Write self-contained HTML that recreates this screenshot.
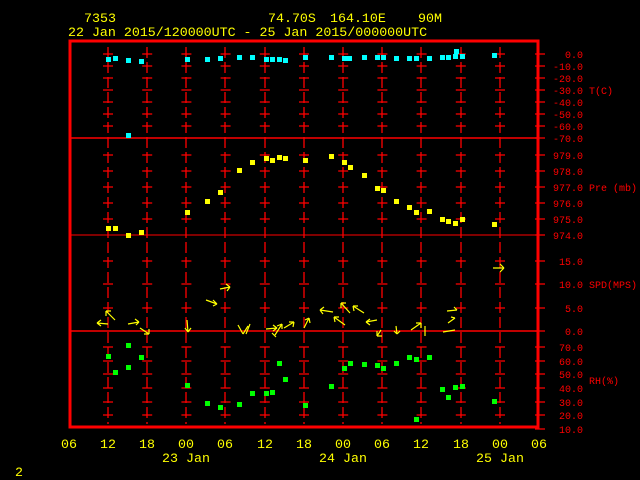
<!DOCTYPE html>
<html><head><meta charset="utf-8"><style>
html,body{margin:0;padding:0;background:#000;width:640px;height:480px;overflow:hidden}
svg{display:block}
text{font-family:"Liberation Mono","DejaVu Sans Mono",monospace}
.y{fill:#ff0}
.r{fill:#f00}
</style></head><body>
<svg width="640" height="480" viewBox="0 0 640 480" xmlns="http://www.w3.org/2000/svg">
<!-- header -->
<g class="y" font-size="13.3">
<text x="84" y="22">7353</text>
<text x="268" y="22">74.70S</text>
<text x="330" y="22">164.10E</text>
<text x="418" y="22">90M</text>
<text x="68" y="36">22 Jan 2015/120000UTC - 25 Jan 2015/000000UTC</text>
</g>
<!-- vertical grid -->
<g stroke="#f00" stroke-width="1.3" stroke-dasharray="11 4">
<line x1="108" y1="47" x2="108" y2="424"/>
<line x1="147" y1="47" x2="147" y2="424"/>
<line x1="186" y1="47" x2="186" y2="424"/>
<line x1="225" y1="47" x2="225" y2="424"/>
<line x1="265" y1="47" x2="265" y2="424"/>
<line x1="304" y1="47" x2="304" y2="424"/>
<line x1="343" y1="47" x2="343" y2="424"/>
<line x1="382" y1="47" x2="382" y2="424"/>
<line x1="421" y1="47" x2="421" y2="424"/>
<line x1="461" y1="47" x2="461" y2="424"/>
<line x1="500" y1="47" x2="500" y2="424"/>
</g>
<!-- tick crosses -->
<g stroke="#f00" stroke-width="1.3" stroke-dasharray="10 29.2">
<line x1="103" x2="510" y1="54" y2="54"/><line x1="103" x2="510" y1="66" y2="66"/>
<line x1="103" x2="510" y1="78" y2="78"/><line x1="103" x2="510" y1="90" y2="90"/>
<line x1="103" x2="510" y1="102" y2="102"/><line x1="103" x2="510" y1="114" y2="114"/>
<line x1="103" x2="510" y1="126" y2="126"/>
<line x1="103" x2="510" y1="155" y2="155"/><line x1="103" x2="510" y1="171" y2="171"/>
<line x1="103" x2="510" y1="187" y2="187"/><line x1="103" x2="510" y1="203" y2="203"/>
<line x1="103" x2="510" y1="219" y2="219"/>
<line x1="103" x2="510" y1="261" y2="261"/><line x1="103" x2="510" y1="284" y2="284"/>
<line x1="103" x2="510" y1="308" y2="308"/>
<line x1="103" x2="510" y1="347" y2="347"/><line x1="103" x2="510" y1="361" y2="361"/>
<line x1="103" x2="510" y1="374" y2="374"/><line x1="103" x2="510" y1="388" y2="388"/>
<line x1="103" x2="510" y1="402" y2="402"/><line x1="103" x2="510" y1="415" y2="415"/>
</g>
<!-- right axis ticks -->
<g stroke="#f00" stroke-width="1.3">
<path d="M535 54h10M535 66h10M535 78h10M535 90h10M535 102h10M535 114h10M535 126h10M535 138h10
M535 155h10M535 171h10M535 187h10M535 203h10M535 219h10M535 235h10
M535 261h10M535 284h10M535 308h10M535 331h10
M535 347h10M535 361h10M535 374h10M535 388h10M535 402h10M535 415h10M535 429h10"/>
</g>
<!-- panel lines -->
<line x1="69" y1="138" x2="538" y2="138" stroke="#f00" stroke-width="1.5"/>
<line x1="69" y1="235" x2="538" y2="235" stroke="#f00" stroke-width="1"/>
<line x1="69" y1="331" x2="538" y2="331" stroke="#f00" stroke-width="1.5"/>
<rect x="70" y="41" width="468" height="386" fill="none" stroke="#f00" stroke-width="3"/>
<!-- right labels -->
<g class="r" font-size="10" text-anchor="end">
<text x="583" y="58">0.0</text><text x="583" y="70">-10.0</text><text x="583" y="82">-20.0</text>
<text x="583" y="94">-30.0</text><text x="583" y="106">-40.0</text><text x="583" y="118">-50.0</text>
<text x="583" y="130">-60.0</text><text x="583" y="142">-70.0</text>
<text x="583" y="159">979.0</text><text x="583" y="175">978.0</text><text x="583" y="191">977.0</text>
<text x="583" y="207">976.0</text><text x="583" y="223">975.0</text><text x="583" y="239">974.0</text>
<text x="583" y="265">15.0</text><text x="583" y="288">10.0</text><text x="583" y="312">5.0</text>
<text x="583" y="335">0.0</text>
<text x="583" y="351">70.0</text><text x="583" y="365">60.0</text><text x="583" y="378">50.0</text>
<text x="583" y="392">40.0</text><text x="583" y="406">30.0</text><text x="583" y="419">20.0</text>
<text x="583" y="433">10.0</text>
</g>
<g class="r" font-size="10">
<text x="589" y="94">T(C)</text>
<text x="589" y="191">Pre (mb)</text>
<text x="589" y="288">SPD(MPS)</text>
<text x="589" y="384">RH(%)</text>
</g>
<!-- bottom labels -->
<g class="y" font-size="13.3" text-anchor="middle">
<text x="69" y="448">06</text><text x="108" y="448">12</text><text x="147" y="448">18</text>
<text x="186" y="448">00</text><text x="225" y="448">06</text><text x="265" y="448">12</text>
<text x="304" y="448">18</text><text x="343" y="448">00</text><text x="382" y="448">06</text>
<text x="421" y="448">12</text><text x="461" y="448">18</text><text x="500" y="448">00</text>
<text x="539" y="448">06</text>
<text x="186" y="462">23 Jan</text><text x="343" y="462">24 Jan</text><text x="500" y="462">25 Jan</text>
<text x="19" y="476">2</text>
</g>
<!-- temperature -->
<g fill="#0ff">
<rect x="106" y="57" width="5" height="5"/><rect x="113" y="56" width="5" height="5"/>
<rect x="126" y="58" width="5" height="5"/><rect x="139" y="59" width="5" height="5"/>
<rect x="185" y="57" width="5" height="5"/><rect x="205" y="57" width="5" height="5"/>
<rect x="218" y="56" width="5" height="5"/><rect x="237" y="55" width="5" height="5"/>
<rect x="250" y="55" width="5" height="5"/><rect x="264" y="57" width="5" height="5"/>
<rect x="270" y="57" width="5" height="5"/><rect x="277" y="57" width="5" height="5"/>
<rect x="283" y="58" width="5" height="5"/><rect x="303" y="55" width="5" height="5"/>
<rect x="329" y="55" width="5" height="5"/><rect x="342" y="56" width="5" height="5"/>
<rect x="347" y="56" width="5" height="5"/><rect x="362" y="55" width="5" height="5"/>
<rect x="375" y="55" width="5" height="5"/><rect x="381" y="55" width="5" height="5"/>
<rect x="394" y="56" width="5" height="5"/><rect x="407" y="56" width="5" height="5"/>
<rect x="414" y="56" width="5" height="5"/><rect x="427" y="56" width="5" height="5"/>
<rect x="440" y="55" width="5" height="5"/><rect x="446" y="55" width="5" height="5"/>
<rect x="453" y="54" width="5" height="5"/><rect x="454" y="49" width="5" height="5"/>
<rect x="460" y="54" width="5" height="5"/><rect x="492" y="53" width="5" height="5"/>
<rect x="126" y="133" width="5" height="5"/>
</g>
<!-- pressure -->
<g fill="#ff0">
<rect x="106" y="226" width="5" height="5"/><rect x="113" y="226" width="5" height="5"/>
<rect x="126" y="233" width="5" height="5"/><rect x="139" y="230" width="5" height="5"/>
<rect x="185" y="210" width="5" height="5"/><rect x="205" y="199" width="5" height="5"/>
<rect x="218" y="190" width="5" height="5"/><rect x="237" y="168" width="5" height="5"/>
<rect x="250" y="160" width="5" height="5"/><rect x="264" y="156" width="5" height="5"/>
<rect x="270" y="158" width="5" height="5"/><rect x="277" y="155" width="5" height="5"/>
<rect x="283" y="156" width="5" height="5"/><rect x="303" y="158" width="5" height="5"/>
<rect x="329" y="154" width="5" height="5"/><rect x="342" y="160" width="5" height="5"/>
<rect x="348" y="165" width="5" height="5"/><rect x="362" y="173" width="5" height="5"/>
<rect x="375" y="186" width="5" height="5"/><rect x="381" y="188" width="5" height="5"/>
<rect x="394" y="199" width="5" height="5"/><rect x="407" y="205" width="5" height="5"/>
<rect x="414" y="210" width="5" height="5"/><rect x="427" y="209" width="5" height="5"/>
<rect x="440" y="217" width="5" height="5"/><rect x="446" y="219" width="5" height="5"/>
<rect x="453" y="221" width="5" height="5"/><rect x="460" y="217" width="5" height="5"/>
<rect x="492" y="222" width="5" height="5"/>
</g>
<!-- RH -->
<g fill="#0f0">
<rect x="106" y="354" width="5" height="5"/><rect x="113" y="370" width="5" height="5"/>
<rect x="126" y="343" width="5" height="5"/><rect x="126" y="365" width="5" height="5"/>
<rect x="139" y="355" width="5" height="5"/><rect x="185" y="383" width="5" height="5"/>
<rect x="205" y="401" width="5" height="5"/><rect x="218" y="405" width="5" height="5"/>
<rect x="237" y="402" width="5" height="5"/><rect x="250" y="391" width="5" height="5"/>
<rect x="264" y="391" width="5" height="5"/><rect x="270" y="390" width="5" height="5"/>
<rect x="277" y="361" width="5" height="5"/><rect x="283" y="377" width="5" height="5"/>
<rect x="303" y="403" width="5" height="5"/><rect x="329" y="384" width="5" height="5"/>
<rect x="342" y="366" width="5" height="5"/><rect x="348" y="361" width="5" height="5"/>
<rect x="362" y="362" width="5" height="5"/><rect x="375" y="363" width="5" height="5"/>
<rect x="381" y="366" width="5" height="5"/><rect x="394" y="361" width="5" height="5"/>
<rect x="407" y="355" width="5" height="5"/><rect x="414" y="357" width="5" height="5"/>
<rect x="427" y="355" width="5" height="5"/><rect x="414" y="417" width="5" height="5"/>
<rect x="440" y="387" width="5" height="5"/><rect x="446" y="395" width="5" height="5"/>
<rect x="453" y="385" width="5" height="5"/><rect x="460" y="384" width="5" height="5"/>
<rect x="492" y="399" width="5" height="5"/>
</g>
<!-- wind arrows -->
<g stroke="#ff0" stroke-width="1.2" fill="none">
<path d="M108 324L97 323M97 323l4-3M97 323l4 3"/>
<path d="M115 320L106 311M106 311l0 5M106 311l5 0"/>
<path d="M128 324L139 322M139 322l-4-3M139 322l-3 3"/>
<path d="M140 328L149 334M149 334l-5 0M149 334l0-5"/>
<path d="M187 320L188 332M188 332l-3-4M188 332l3-4"/>
<path d="M206 300L217 304M217 304l-4-4M217 304l-4 2"/>
<path d="M220 289L230 287M230 287l-4-3M230 287l-3 4"/>
<path d="M238 325L243 334M243 334l5-8M250 324L246 334"/>
<path d="M266 329L277 328M277 328l-4-3M277 328l-4 3"/>
<path d="M275 335L282 324M282 324l-5 2M282 324l0 5M272 333l4 4"/>
<path d="M284 328L294 322M294 322l-5 0M294 322l-1 5"/>
<path d="M304 328L309 318M309 318l-4 2M309 318l1 5"/>
<path d="M333 312L320 310M320 310l4-3M320 310l3 4"/>
<path d="M350 313L341 303M341 303l0 5M341 303l5 0"/>
<path d="M345 325L334 317M334 317l1 5M334 317l5 0"/>
<path d="M364 313L353 306M353 306l1 5M353 306l5 0"/>
<path d="M377 320L366 322M366 322l4-3M366 322l4 3"/>
<path d="M381 330L377 336M377 336l0-5M377 336l5 0"/>
<path d="M396 326L397 334M397 334l-3-3M397 334l3-3"/>
<path d="M411 330L421 323M421 323l-5 0M421 323l0 5M425 326l0 10"/>
<path d="M443 332L455 330M448 323L455 318M455 318l-4-1M447 311L457 310M457 310l-3-3"/>
<path d="M493 268L504 268M504 268l-4-4M504 268l-4 4"/>
</g>
</svg>
</body></html>
